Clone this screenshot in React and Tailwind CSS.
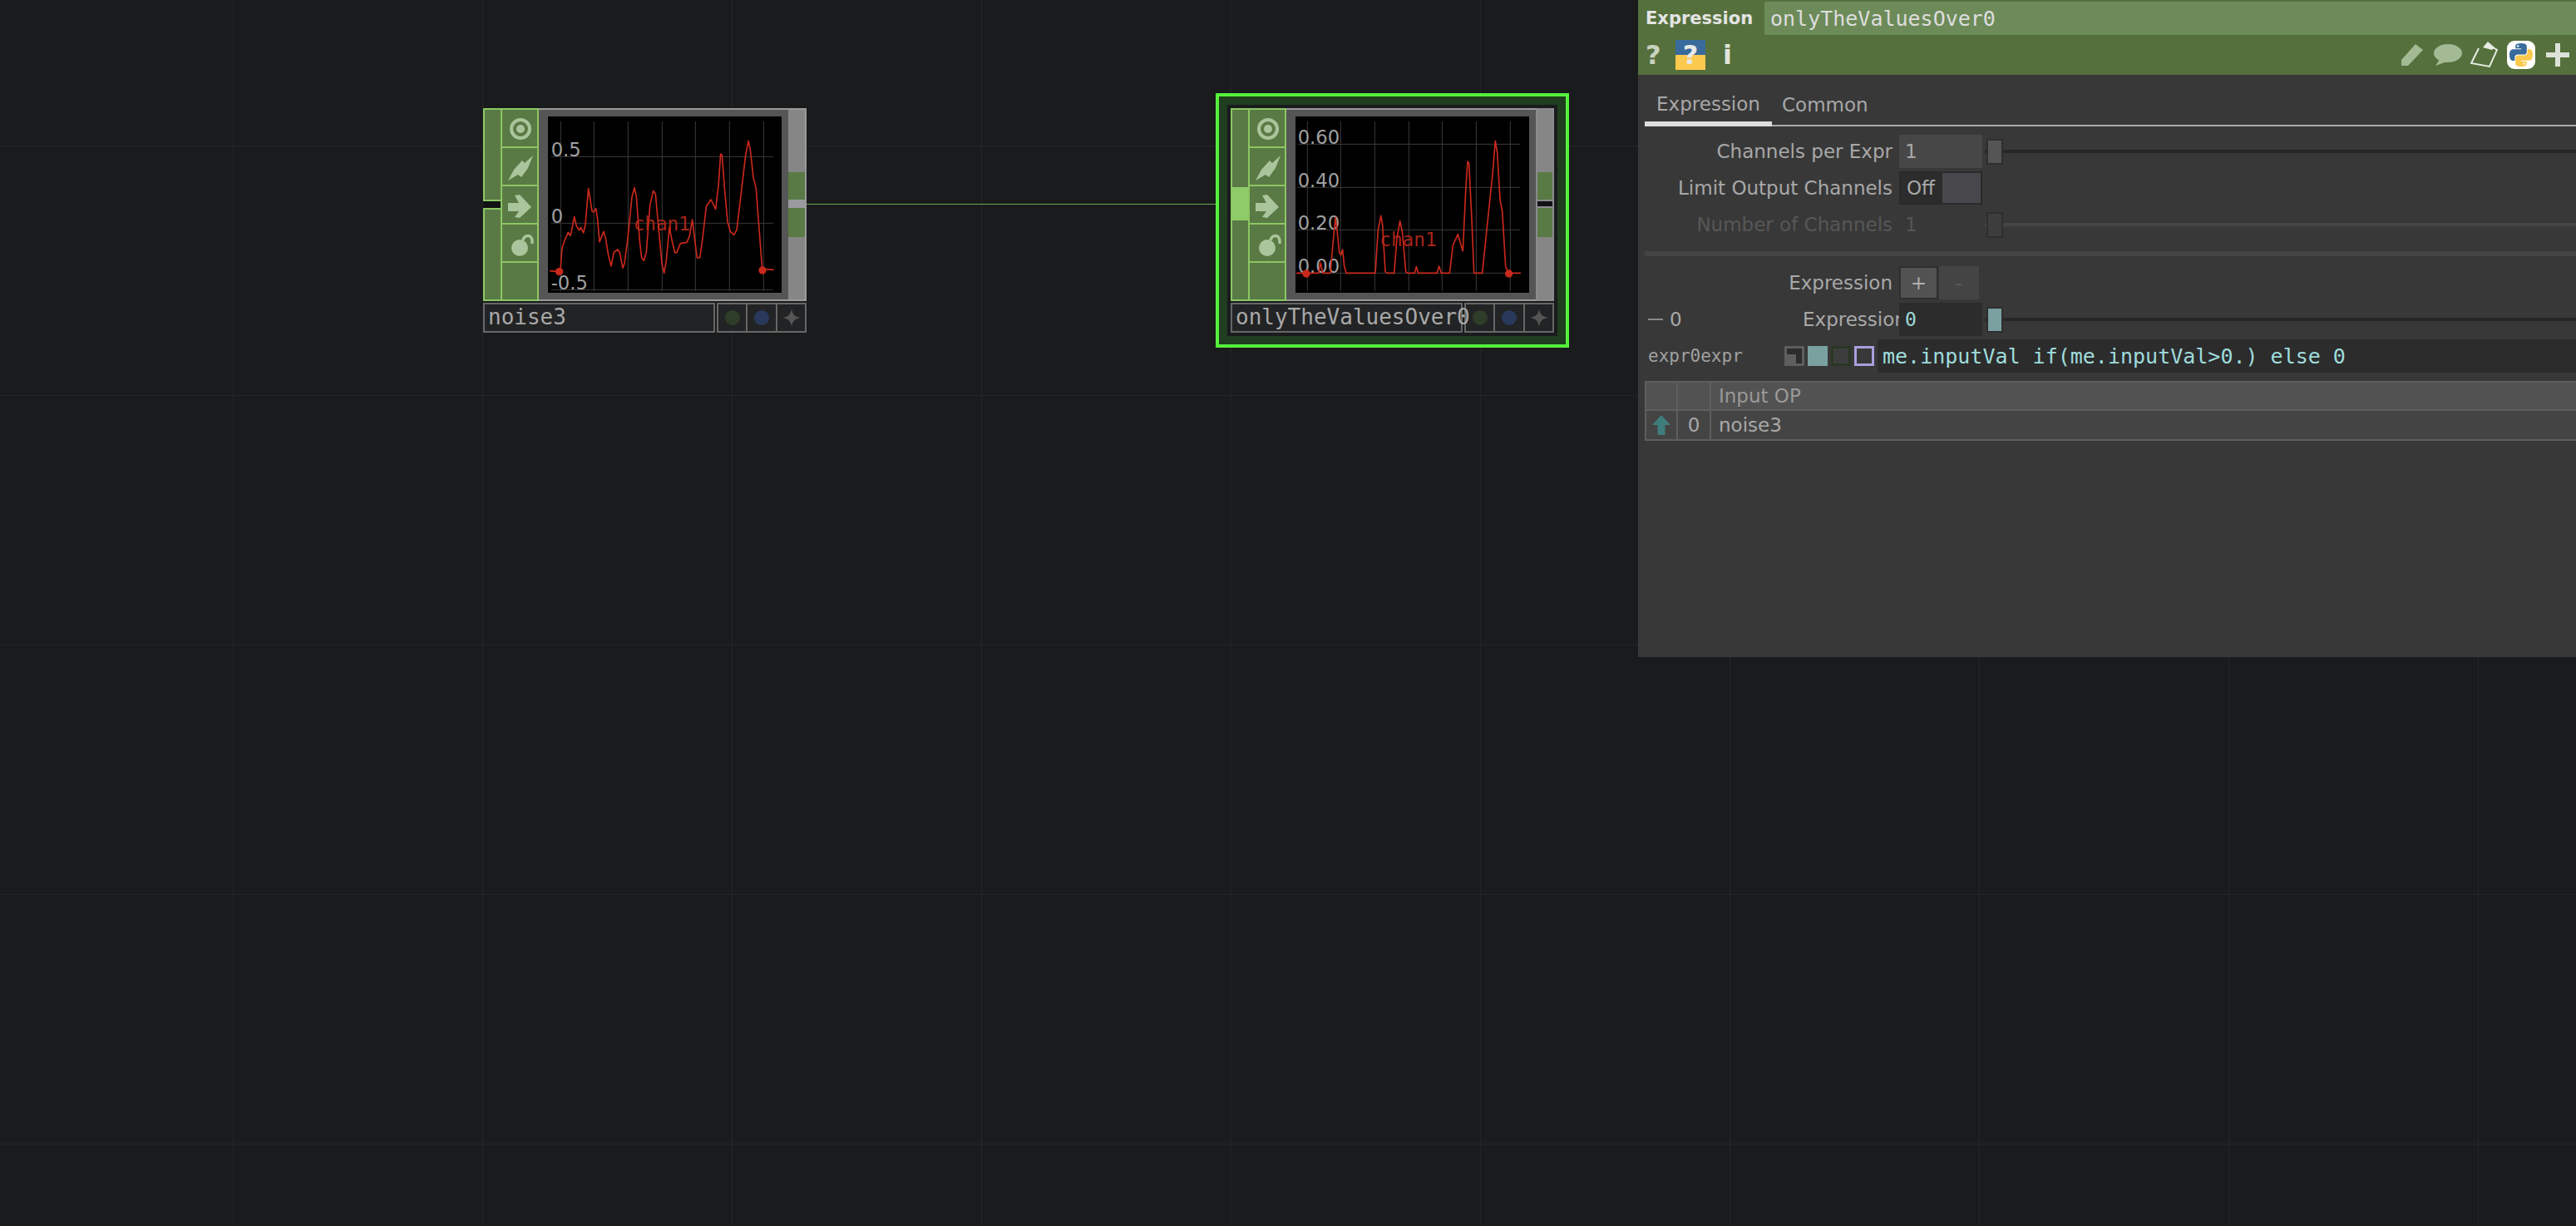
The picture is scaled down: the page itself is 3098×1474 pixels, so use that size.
const noiseCurve = "63,587 98,590 103,570 108,505 118,475 130,448 138,460 143,440 152,392 160,425 170,440 176,430 185,450 192,420 203,290 208,320 216,372 222,375 230,362 236,400 243,483 258,445 265,470 275,530 285,570 295,520 308,510 316,520 327,577 333,560 345,470 360,320 369,287 376,320 388,480 395,540 403,550 412,520 425,350 437,298 445,310 455,420 468,560 476,595 484,550 495,430 505,480 515,522 522,520 535,488 558,484 568,460 578,402 586,470 595,540 605,540 615,470 628,355 645,330 655,350 662,365 672,280 680,165 685,170 695,300 705,410 715,445 728,457 738,440 750,340 770,170 780,118 787,150 798,250 808,290 820,450 830,580 872,583";
const exprCurve = "57,595 137,595 145,558 152,595 180,595 190,480 198,395 204,440 212,520 218,530 224,510 230,570 237,595 342,595 352,440 362,388 368,420 378,590 385,595 410,595 420,470 431,407 440,450 452,590 458,595 484,595 490,572 497,595 565,595 572,570 580,595 610,595 622,495 640,455 650,490 658,515 668,300 675,192 680,200 690,400 698,595 728,595 745,430 765,240 775,118 782,160 792,330 800,370 812,570 822,595 867,595";

function Graph({ originX, curve, vLines, hLines, labels, chan, markers, lineLeft, lineRight }) {
  return (
    <svg width="281" height="212" viewBox={`${originX} 30 843 636`} className="block bg-black">
      {vLines.map((x) => (
        <line key={x} x1={x} x2={x} y1="48" y2="660" stroke="#3a3a3a" strokeWidth="3" />
      ))}
      {hLines.map((y) => (
        <line key={y} x1={lineLeft} x2={lineRight} y1={y} y2={y} stroke="#3a3a3a" strokeWidth="3" />
      ))}
      {labels.map((l) => (
        <text key={l.t} x={l.x} y={l.y} fill="#a0a0a0" fontSize="68" fontFamily="DejaVu Sans">
          {l.t}
        </text>
      ))}
      <text x={chan[0]} y={chan[1]} fill="#a6251a" fontSize="68" fontFamily="DejaVu Sans Mono">
        chan1
      </text>
      <polyline points={curve} fill="none" stroke="#c9281c" strokeWidth="5" strokeLinejoin="round" />
      {markers.map((m) => (
        <circle key={m[0]} cx={m[0]} cy={m[1]} r="14" fill="#c9281c" />
      ))}
    </svg>
  );
}

function ViewerIcon({ children }) {
  return (
    <div className="h-[46px] border-b-2 border-[#8cc664] bg-[#5a7a45]">
      <svg width="44" height="46" viewBox="0 0 44 46" className="block">
        {children}
      </svg>
    </div>
  );
}

function Node({ name, graph, active, splitOutput }) {
  return (
    <div className="w-[389px]">
      <div className="flex h-[232px]">
        {/* input connector */}
        {active ? (
          <div className="flex w-[21px] flex-col border-2 border-r-0 border-[#8cc664] bg-[#5a7a45]">
            <div className="h-[93px]"></div>
            <div className="h-[40px] bg-[#8fcb68]"></div>
          </div>
        ) : (
          <div className="flex w-[21px] flex-col">
            <div className="h-[112px] border-2 border-r-0 border-[#8cc664] bg-[#5a7a45]"></div>
            <div className="h-[8px] bg-[#111213]"></div>
            <div className="flex-1 border-2 border-r-0 border-[#8cc664] bg-[#5a7a45]"></div>
          </div>
        )}

        {/* viewer buttons */}
        <div className="flex w-[46px] flex-col border-2 border-[#8cc664] bg-[#5a7a45]">
          <ViewerIcon>
            <circle cx="22" cy="23" r="11" fill="none" stroke="#aac59b" strokeWidth="4" />
            <circle cx="22" cy="23" r="5" fill="#aac59b" />
          </ViewerIcon>
          <ViewerIcon>
            <polygon points="37,9 27,18 24,15 14,26 7,39 19,32 23,35 31,24" fill="#aac59b" />
          </ViewerIcon>
          <ViewerIcon>
            <polygon points="7,20 20,20 15,11 21,10 35,25 21,38 15,37 20,30 7,30" fill="#aac59b" />
          </ViewerIcon>
          <ViewerIcon>
            <circle cx="21" cy="28" r="10" fill="#aac59b" />
            <path d="M25 19C26 12 36 11 36 20V23" fill="none" stroke="#aac59b" strokeWidth="3.5" />
          </ViewerIcon>
          <div className="flex-1"></div>
        </div>

        <div className="w-[300px] border-y-2 border-[#9a9a9a] bg-[#555555] pt-[8px] pr-[8px] pl-[11px]">{graph}</div>

        {/* output connector */}
        <div className={`flex w-[22px] flex-col border-2 ${splitOutput ? "border-[#8b8b90]" : "border-l-0 border-[#9a9a9a]"} bg-[#868686]`}>
          <div className="h-[75px]"></div>
          <div className="h-[33px] bg-[#5a7a45]"></div>
          <div className={`h-[10px] ${splitOutput ? "border-y-2 border-[#8b8b90] bg-[#111213]" : "bg-[#9a9a9f]"}`}></div>
          <div className="h-[35px] bg-[#5a7a45]"></div>
        </div>
      </div>

      <div className="mt-[2px] flex h-[36px] gap-[2px]">
        <div className="w-[279px] whitespace-nowrap border-2 border-[#666666] bg-[#222324] pl-[4px] font-['DejaVu_Sans_Mono'] text-[26px] leading-[30px] text-[#a8a8a8]">
          <span className="relative z-10">{name}</span>
        </div>
        <div className="flex flex-1 border-2 border-[#666666] bg-[#222324]">
          <div className="flex w-[35px] items-center justify-center border-r-2 border-[#666666]">
            <div className="h-[18px] w-[18px] rounded-full bg-[#2e3d28]"></div>
          </div>
          <div className="flex w-[36px] items-center justify-center border-r-2 border-[#666666]">
            <div className="h-[18px] w-[18px] rounded-full bg-[#28395c]"></div>
          </div>
          <div className="flex flex-1 items-center justify-center">
            <svg width="22" height="22" viewBox="0 0 22 22">
              <path d="M11 0C12 7 15 10 22 11C15 12 12 15 11 22C10 15 7 12 0 11C7 10 10 7 11 0Z" fill="#555555" />
            </svg>
          </div>
        </div>
      </div>
    </div>
  );
}

function Slider({ dim, teal }) {
  return (
    <div className="ml-[5px] flex flex-1 items-center">
      <div className={`relative z-10 h-[31px] w-[20px] border-2 ${dim ? "border-[#2e2e2e] bg-[#3d3d3d]" : teal ? "border-[#2e2e2e] bg-[#7aa0a0]" : "border-[#2e2e2e] bg-[#555555]"}`}></div>
      <div className={`-ml-[22px] h-[4px] flex-1 ${dim ? "bg-[#454545]" : "bg-[#262626]"}`}></div>
    </div>
  );
}

function ParamRow({ label, dim, children }) {
  return (
    <div className="flex h-[40px] items-center">
      <div className={`w-[306px] pr-0 text-right ${dim ? "text-[#575757]" : "text-[#a8a8a8]"}`}>{label}</div>
      <div className="ml-[8px] flex flex-1 items-center">{children}</div>
    </div>
  );
}

function PythonLogo() {
  const blue = "M54.9 0C26.8 0 28.6 12.2 28.6 12.2l0 12.6h26.8v3.8H17.9S0 26.6 0 54.9s15.6 27.3 15.6 27.3h9.3V69.1s-.5-15.6 15.4-15.6h26.5s14.9.2 14.9-14.4V14.9S83.9 0 54.9 0zM40.2 8.5a4.8 4.8 0 1 1 0 9.6 4.8 4.8 0 0 1 0-9.6z";
  return (
    <div className="flex h-[34px] w-[34px] items-center justify-center rounded-[9px] bg-white">
      <svg width="28" height="28" viewBox="0 0 110 110">
        <path d={blue} fill="#386b9c" />
        <path d={blue} fill="#fbc94e" transform="rotate(180 55 55)" />
      </svg>
    </div>
  );
}

function ParamPanel() {
  return (
    <div className="absolute top-0 right-0 h-[790px] w-[1128px] bg-[#383838] font-['DejaVu_Sans'] text-[23px] leading-none">
      {/* title + icons */}
      <div className="h-[90px] bg-[#55703c] pt-[2px]">
        <div className="flex h-[40px]">
          <div className="flex w-[152px] items-center pl-[9px] text-[21px] font-bold text-[#e4e4e4]">Expression</div>
          <div className="flex flex-1 items-center bg-[#6d8b59] pl-[7px] font-['DejaVu_Sans_Mono'] text-[25px] text-[#dddddd]">onlyTheValuesOver0</div>
        </div>
        <div className="flex h-[48px] items-center">
          <div className="ml-[9px] w-[36px] text-[32px] font-bold text-[#c8d2c0]">?</div>
          <div className="relative flex h-[36px] w-[36px] items-center justify-center bg-[linear-gradient(to_bottom,#386b9c_50%,#fbc94e_50%)] text-[32px] font-bold text-[#e8e8e8]">?</div>
          <div className="ml-[21px] text-[32px] font-bold text-[#dfe5da]">i</div>

          <div className="ml-auto flex items-center">
            <svg width="28" height="30" viewBox="0 0 28 30" className="mr-[12px]">
              <path d="M1 21L18 2L27 9L9 28H1Z" fill="#a3ba94" />
            </svg>
            <svg width="34" height="28" viewBox="0 0 34 28" className="mr-[10px]">
              <ellipse cx="17" cy="12" rx="17" ry="11" fill="#a3ba94" />
              <path d="M8 18L2 27L16 22Z" fill="#a3ba94" />
            </svg>
            <svg width="34" height="34" viewBox="0 0 34 34" className="mr-[10px]">
              <path d="M10 9L1 27L23 31L32 11L25 7" fill="none" stroke="#e6ebe2" strokeWidth="2" />
              <path d="M15 8L21 1L29 8L26 11Z" fill="#e6ebe2" />
            </svg>
            <PythonLogo />
            <svg width="28" height="28" viewBox="0 0 28 28" className="mr-[8px] ml-[13px]">
              <path d="M11 0H17V11H28V17H17V28H11V17H0V11H11Z" fill="#dde2d8" />
            </svg>
          </div>
        </div>
      </div>

      {/* page tabs */}
      <div className="ml-[8px] flex h-[62px] border-b-2 border-[#aaaaaa] text-[#a8a8a8]">
        <div className="-mb-[2px] flex w-[153px] items-center justify-center border-b-[6px] border-[#dddddd] pt-[14px]">Expression</div>
        <div className="ml-[12px] flex items-center pt-[12px]">Common</div>
      </div>

      <div className="mt-[10px] flex flex-col gap-[4px]">
        <ParamRow label="Channels per Expr">
          <div className="flex h-[40px] w-[100px] items-center bg-[#474747] pl-[7px] text-[#a8a8a8]">1</div>
          <Slider />
        </ParamRow>
        <ParamRow label="Limit Output Channels">
          <div className="flex h-[40px] w-[100px] border-2 border-[#2a2a2a] bg-[#48484c]">
            <div className="flex w-[50px] items-center bg-[#2c2c2c] pl-[7px] text-[#a8a8a8]">Off</div>
          </div>
        </ParamRow>
        <ParamRow label="Number of Channels" dim>
          <div className="flex h-[40px] w-[100px] items-center pl-[7px] text-[#575757]">1</div>
          <Slider dim />
        </ParamRow>
      </div>

      <div className="mt-[12px] ml-[8px] h-[6px] bg-[#444444]"></div>

      <div className="mt-[12px] flex flex-col gap-[4px]">
        <ParamRow label="Expression">
          <div className="flex h-[40px] w-[47px] items-center justify-center border-2 border-[#2e2e2e] bg-[#525252] text-[#b0b0b0]">+</div>
          <div className="ml-[1px] flex h-[40px] w-[48px] items-center justify-center bg-[#444444] text-[#5e5e5e]">-</div>
        </ParamRow>
        <div className="flex h-[40px] items-center">
          <div className="ml-[12px] h-[2px] w-[18px] bg-[#8a8a8a]"></div>
          <div className="ml-[8px] w-[150px] text-[#a8a8a8]">0</div>
          <div className="w-[118px] pl-[10px] text-right text-[#a8a8a8]">Expression</div>
          <div className="ml-[8px] flex flex-1 items-center">
            <div className="flex h-[40px] w-[100px] items-center bg-[#2c2c2c] pl-[7px] font-['DejaVu_Sans_Mono'] text-[#9fdcdc]">0</div>
            <Slider teal />
          </div>
        </div>
        <div className="flex h-[40px] items-center">
          <div className="ml-[12px] w-[164px] font-['DejaVu_Sans_Mono'] text-[21px] text-[#a0a0a0]">expr0expr</div>
          <div className="relative h-[24px] w-[24px] border-[3px] border-[#5e5e5e] bg-[#2c2c2c]">
            <div className="absolute bottom-0 left-0 h-[11px] w-[11px] bg-[#5e5e5e]"></div>
          </div>
          <div className="ml-[4px] h-[24px] w-[24px] bg-[#7aa0a0]"></div>
          <div className="ml-[4px] h-[24px] w-[24px] border-[3px] border-[#2a3522] bg-[#3d3d3d]"></div>
          <div className="ml-[4px] h-[24px] w-[24px] border-[3px] border-[#a99fdc] bg-[#383838]"></div>
          <div className="ml-[4px] flex h-[40px] flex-1 items-center bg-[#2c2c2c] pl-[6px] font-['DejaVu_Sans_Mono'] text-[25px] text-[#9fdcdc]">
            me.inputVal if(me.inputVal&gt;0.) else 0
          </div>
        </div>
      </div>

      {/* input table */}
      <div className="mt-[10px] ml-[8px] text-[#a8a8a8]">
        <div className="flex h-[36px] border-y-2 border-[#5e5e5e] bg-[#525252] text-[#999999]">
          <div className="w-[40px] border-x-2 border-[#5e5e5e]"></div>
          <div className="w-[40px] border-r-2 border-[#5e5e5e]"></div>
          <div className="flex flex-1 items-center pl-[9px]">Input OP</div>
        </div>
        <div className="flex h-[36px] border-b-2 border-[#5e5e5e] bg-[#444444]">
          <div className="flex w-[40px] items-center justify-center border-x-2 border-[#5e5e5e]">
            <svg width="22" height="24" viewBox="0 0 22 24">
              <path d="M11 0L22 12L15.5 12V24H6.5V12L0 12Z" fill="#3f7c7c" />
            </svg>
          </div>
          <div className="flex w-[40px] items-center justify-center border-r-2 border-[#5e5e5e]">0</div>
          <div className="flex flex-1 items-center pl-[9px]">noise3</div>
        </div>
      </div>
    </div>
  );
}

export default function App() {
  return (
    <div className="relative h-[1474px] w-[3098px] overflow-hidden bg-[#191b1d] bg-[linear-gradient(to_right,#232528_1px,transparent_1px),linear-gradient(to_bottom,#232528_1px,transparent_1px)] bg-size-[300px_300px] bg-position-[280px_175px]">
      {/* wire between the two operators */}
      <div className="absolute top-[245px] left-[970px] h-[1px] w-[508px] bg-[#6aa84f]"></div>

      <div className="absolute top-[130px] left-[581px]">
        <Node
          name="noise3"
          graph={
            <Graph
              originX={57}
              curve={noiseCurve}
              vLines={[103, 223, 346, 469, 589, 712, 835]}
              hLines={[175, 415, 655]}
              lineLeft={68}
              lineRight={870}
              labels={[
                { t: "0.5", x: 68, y: 175 },
                { t: "0", x: 68, y: 415 },
                { t: "-0.5", x: 68, y: 655 },
              ]}
              chan={[365, 440]}
              markers={[[98, 590], [831, 585]]}
            />
          }
        />
      </div>

      <div className="absolute top-[112px] left-[1462px] h-[306px] w-[425px] border-4 border-[#55f03c] bg-[#1f3d1f] p-[10px]">
        <div className="h-full w-full bg-[#191b1d] p-[4px]">
          <Node
            name="onlyTheValuesOver0"
            active
            splitOutput
            graph={
              <Graph
                originX={54}
                curve={exprCurve}
                vLines={[97, 217, 340, 463, 583, 706, 829]}
                hLines={[130, 286, 439, 595]}
                lineLeft={62}
                lineRight={864}
                labels={[
                  { t: "0.60", x: 62, y: 130 },
                  { t: "0.40", x: 62, y: 286 },
                  { t: "0.20", x: 62, y: 439 },
                  { t: "0.00", x: 62, y: 595 },
                ]}
                chan={[358, 497]}
                markers={[[93, 597], [824, 597]]}
              />
            }
          />
        </div>
      </div>

      <ParamPanel />
    </div>
  );
}
